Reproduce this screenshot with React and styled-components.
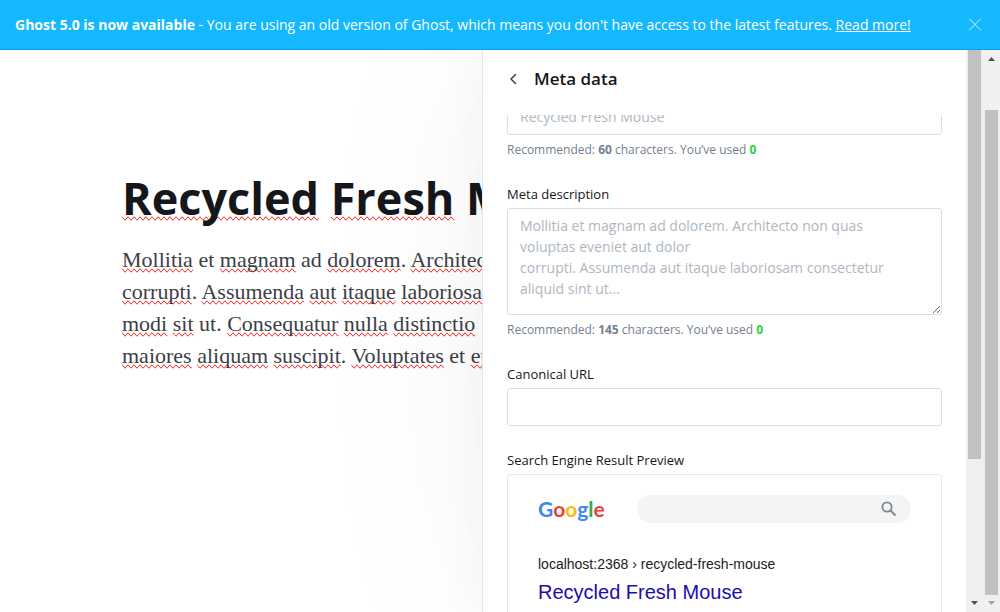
import React from "react";
import styled, { createGlobalStyle } from "styled-components";

const GlobalStyle = createGlobalStyle`
  *, *::before, *::after { box-sizing: border-box; }
  html, body, #root { height: 100%; }
  body {
    margin: 0;
    overflow: hidden;
    background: #fff;
    color: #15171a;
    font-family: "Open Sans", "Noto Sans", sans-serif;
  }
`;

const Page = styled.div`
  display: flex;
  flex-direction: column;
  height: 100vh;
`;

const Banner = styled.header`
  flex: none;
  position: relative;
  z-index: 2;
  display: flex;
  align-items: center;
  justify-content: space-between;
  height: 50px;
  padding: 0 18px 0 15px;
  background: #14b8ff;
  border-bottom: 1px solid #0a9fe2;
  color: #fff;
`;

const BannerText = styled.p`
  margin: 0;
  font-size: 14px;
  line-height: 20px;
  white-space: nowrap;
`;

const BannerStrong = styled.b`
  font-weight: 700;
`;

const BannerLink = styled.a`
  color: #fff;
  text-decoration: underline;
`;

const IconButton = styled.button`
  display: flex;
  padding: 0;
  border: 0;
  background: none;
  color: ${(p) => p.$color};
  cursor: pointer;
`;

const Workspace = styled.div`
  flex: 1;
  min-height: 0;
  display: flex;
`;

const Editor = styled.main`
  flex: 1;
  min-width: 0;
  overflow: hidden;
  padding: 116px 0 0 122px;
  white-space: nowrap;
`;

const PostTitle = styled.h1`
  margin: 0 0 14px;
  font-size: 45px;
  font-weight: 700;
  line-height: 64px;
`;

const PostBody = styled.p`
  margin: 0;
  color: #3b4046;
  font-family: Georgia, "Liberation Serif", serif;
  font-size: 22px;
  line-height: 32px;
`;

const Misspelled = styled.span`
  text-decoration-line: spelling-error;
`;

const Panel = styled.aside`
  flex: none;
  position: relative;
  z-index: 1;
  display: flex;
  flex-direction: column;
  width: 484px;
  background: #fff;
  border-left: 1px solid #e3e6e9;
  box-shadow: 0 0 200px rgba(0, 0, 0, 0.05), 0 0 50px rgba(0, 0, 0, 0.04);
`;

const PanelHeader = styled.div`
  flex: none;
  display: flex;
  align-items: center;
  gap: 15px;
  height: 65px;
  padding: 0 24px 8px;
`;

const PanelTitle = styled.h2`
  margin: 0;
  font-size: 17px;
  font-weight: 600;
  line-height: 24px;
`;

const PanelBody = styled.div`
  flex: 1;
  min-height: 0;
  overflow: hidden;
  padding: 0 24px;
`;

const Form = styled.form`
  margin-top: -18px;
`;

const Field = styled.div`
  display: flex;
  flex-direction: column;
  margin-bottom: 24px;
`;

const Label = styled.label`
  margin-bottom: 4px;
  font-size: 13px;
  font-weight: 500;
  line-height: 20px;
`;

const Input = styled.input`
  width: 100%;
  height: 38px;
  padding: 0 12px;
  border: 1px solid #dddedf;
  border-radius: 3px;
  background: #fff;
  color: #15171a;
  font: 14px/20px "Open Sans", "Noto Sans", sans-serif;
  &::placeholder { color: #aeb7c1; }
`;

const TextArea = styled.textarea`
  width: 100%;
  height: 107px;
  padding: 6px 32px 6px 12px;
  border: 1px solid #dddedf;
  border-radius: 3px;
  background: #fff;
  color: #15171a;
  font: 14px/21px "Open Sans", "Noto Sans", sans-serif;
  resize: vertical;
  overflow: hidden;
  &::placeholder { color: #aeb7c1; }
`;

const Help = styled.p`
  margin: 4px 0 0;
  color: #738192;
  font-size: 12px;
  line-height: 21px;
`;

const Count = styled.b`
  color: #30cf43;
`;

const Preview = styled.section`
  height: 240px;
  padding: 20px 30px;
  border: 1px solid #e5e7e8;
  border-radius: 3px;
  font-family: Arial, "Liberation Sans", sans-serif;
`;

const SearchRow = styled.div`
  display: flex;
  align-items: center;
  justify-content: space-between;
  gap: 32px;
  margin-bottom: 32px;
`;

const Wordmark = styled.div`
  flex: none;
  width: 67px;
  height: 28px;
  font-family: Lato, sans-serif;
  font-size: 21px;
  font-weight: 700;
  line-height: 28px;
`;

const Letter = styled.span`
  color: ${(p) => p.$color};
`;

const SearchPill = styled.div`
  flex: 1;
  display: flex;
  align-items: center;
  justify-content: flex-end;
  height: 28px;
  padding-right: 14px;
  border-radius: 14px;
  background: #f3f4f6;
`;

const ResultUrl = styled.div`
  margin-bottom: 6px;
  color: #202124;
  font-size: 14px;
  line-height: 18px;
`;

const ResultTitle = styled.a`
  display: block;
  color: #1a0dab;
  font-size: 20px;
  line-height: 26px;
  text-decoration: none;
`;

const Scrollbar = styled.div`
  flex: none;
  position: relative;
  z-index: 1;
  display: flex;
  flex-direction: column;
  width: 17px;
  padding: 0 2px;
  background: #f0f0f0;
`;

const Arrow = styled.svg`
  flex: none;
  width: 13px;
  height: 17px;
  fill: ${(p) => p.$color};
`;

const Lane = styled.div`
  flex: 1;
  display: flex;
  flex-direction: column;
  padding-top: ${(p) => p.$start};
`;

const Thumb = styled.div`
  height: ${(p) => p.$size};
  background: #c1c1c1;
`;

const GOOGLE = [
  ["G", "#4285f4"],
  ["o", "#ea4335"],
  ["o", "#fbbc05"],
  ["g", "#4285f4"],
  ["l", "#34a853"],
  ["e", "#ea4335"],
];

// Words wrapped in underscores are flagged by the spell checker.
const BODY_LINES = [
  "_Mollitia_ et _magnam_ ad _dolorem_. _Architecto_",
  "_corrupti_. _Assumenda_ _aut_ _itaque_ _laboriosam_",
  "_modi_ _sit_ ut. _Consequatur_ _nulla_ _distinctio_",
  "_maiores_ _aliquam_ _suscipit_. _Voluptates_ et _eum_",
];

function SpellChecked({ text }) {
  return text
    .split("_")
    .map((part, i) => (i % 2 ? <Misspelled key={i}>{part}</Misspelled> : part));
}

function ArrowUp({ color }) {
  return (
    <Arrow $color={color} viewBox="0 0 13 17" aria-hidden="true">
      <path d="M3 11h7L6.500 7z" />
    </Arrow>
  );
}

function ArrowDown({ color }) {
  return (
    <Arrow $color={color} viewBox="0 0 13 17" aria-hidden="true">
      <path d="M3 6h7L6.500 10z" />
    </Arrow>
  );
}

export default function App() {
  return (
    <Page>
      <GlobalStyle />
      <Banner>
        <BannerText>
          <BannerStrong>Ghost 5.0 is now available</BannerStrong> - You are
          using an old version of Ghost, which means you don't have access to
          the latest features.{" "}
          <BannerLink href="#upgrade">Read more!</BannerLink>
        </BannerText>
        <IconButton type="button" aria-label="Dismiss" $color="#d6f2ff">
          <svg width="14" height="14" viewBox="0 0 14 14" fill="none" stroke="currentColor" strokeLinecap="round">
            <path d="M1.500 1l11 11M12.500 1l-11 11" />
          </svg>
        </IconButton>
      </Banner>
      <Workspace>
        <Editor>
          <PostTitle>
            <SpellChecked text="_Recycled_ _Fresh_ Mouse" />
          </PostTitle>
          <PostBody>
            {BODY_LINES.map((line) => (
              <React.Fragment key={line}>
                <SpellChecked text={line} />
                <br />
              </React.Fragment>
            ))}
          </PostBody>
        </Editor>
        <Panel>
          <PanelHeader>
            <IconButton type="button" aria-label="Back" $color="#394047">
              <svg width="12" height="14" viewBox="0 0 12 14" fill="none" stroke="currentColor" strokeWidth="1.500" strokeLinecap="round" strokeLinejoin="round">
                <path d="M8.500 2.500L4 7l4.500 4.500" />
              </svg>
            </IconButton>
            <PanelTitle>Meta data</PanelTitle>
          </PanelHeader>
          <PanelBody>
            <Form>
              <Field>
                <Input aria-label="Meta title" placeholder="Recycled Fresh Mouse" />
                <Help>
                  Recommended: <b>60</b> characters. You’ve used <Count>0</Count>
                </Help>
              </Field>
              <Field>
                <Label htmlFor="meta-description">Meta description</Label>
                <TextArea
                  id="meta-description"
                  placeholder={
                    "Mollitia et magnam ad dolorem. Architecto non quas voluptas eveniet aut dolor\ncorrupti. Assumenda aut itaque laboriosam consectetur aliquid sint ut..."
                  }
                />
                <Help>
                  Recommended: <b>145</b> characters. You’ve used <Count>0</Count>
                </Help>
              </Field>
              <Field>
                <Label htmlFor="canonical-url">Canonical URL</Label>
                <Input id="canonical-url" type="url" />
              </Field>
              <Field>
                <Label as="div" id="serp-label">
                  Search Engine Result Preview
                </Label>
                <Preview aria-labelledby="serp-label">
                  <SearchRow>
                    <Wordmark>
                      {GOOGLE.map(([letter, color], i) => (
                        <Letter key={i} $color={color}>{letter}</Letter>
                      ))}
                    </Wordmark>
                    <SearchPill>
                      <svg width="16" height="16" viewBox="0 0 16 16" fill="none" stroke="#80868b" strokeWidth="1.800" aria-hidden="true">
                        <circle cx="6" cy="6" r="4.600" />
                        <path d="M9.500 9.500l5 5" />
                      </svg>
                    </SearchPill>
                  </SearchRow>
                  <ResultUrl>localhost:2368 › recycled-fresh-mouse</ResultUrl>
                  <ResultTitle href="#result">Recycled Fresh Mouse</ResultTitle>
                </Preview>
              </Field>
            </Form>
          </PanelBody>
        </Panel>
        <Scrollbar>
          <Lane $start="0">
            <Thumb $size="75%" />
          </Lane>
          <ArrowDown color="#505050" />
        </Scrollbar>
        <Scrollbar>
          <ArrowUp color="#505050" />
          <Lane $start="43px">
            <Thumb $size="100%" />
          </Lane>
          <ArrowDown color="#a3a3a3" />
        </Scrollbar>
      </Workspace>
    </Page>
  );
}
